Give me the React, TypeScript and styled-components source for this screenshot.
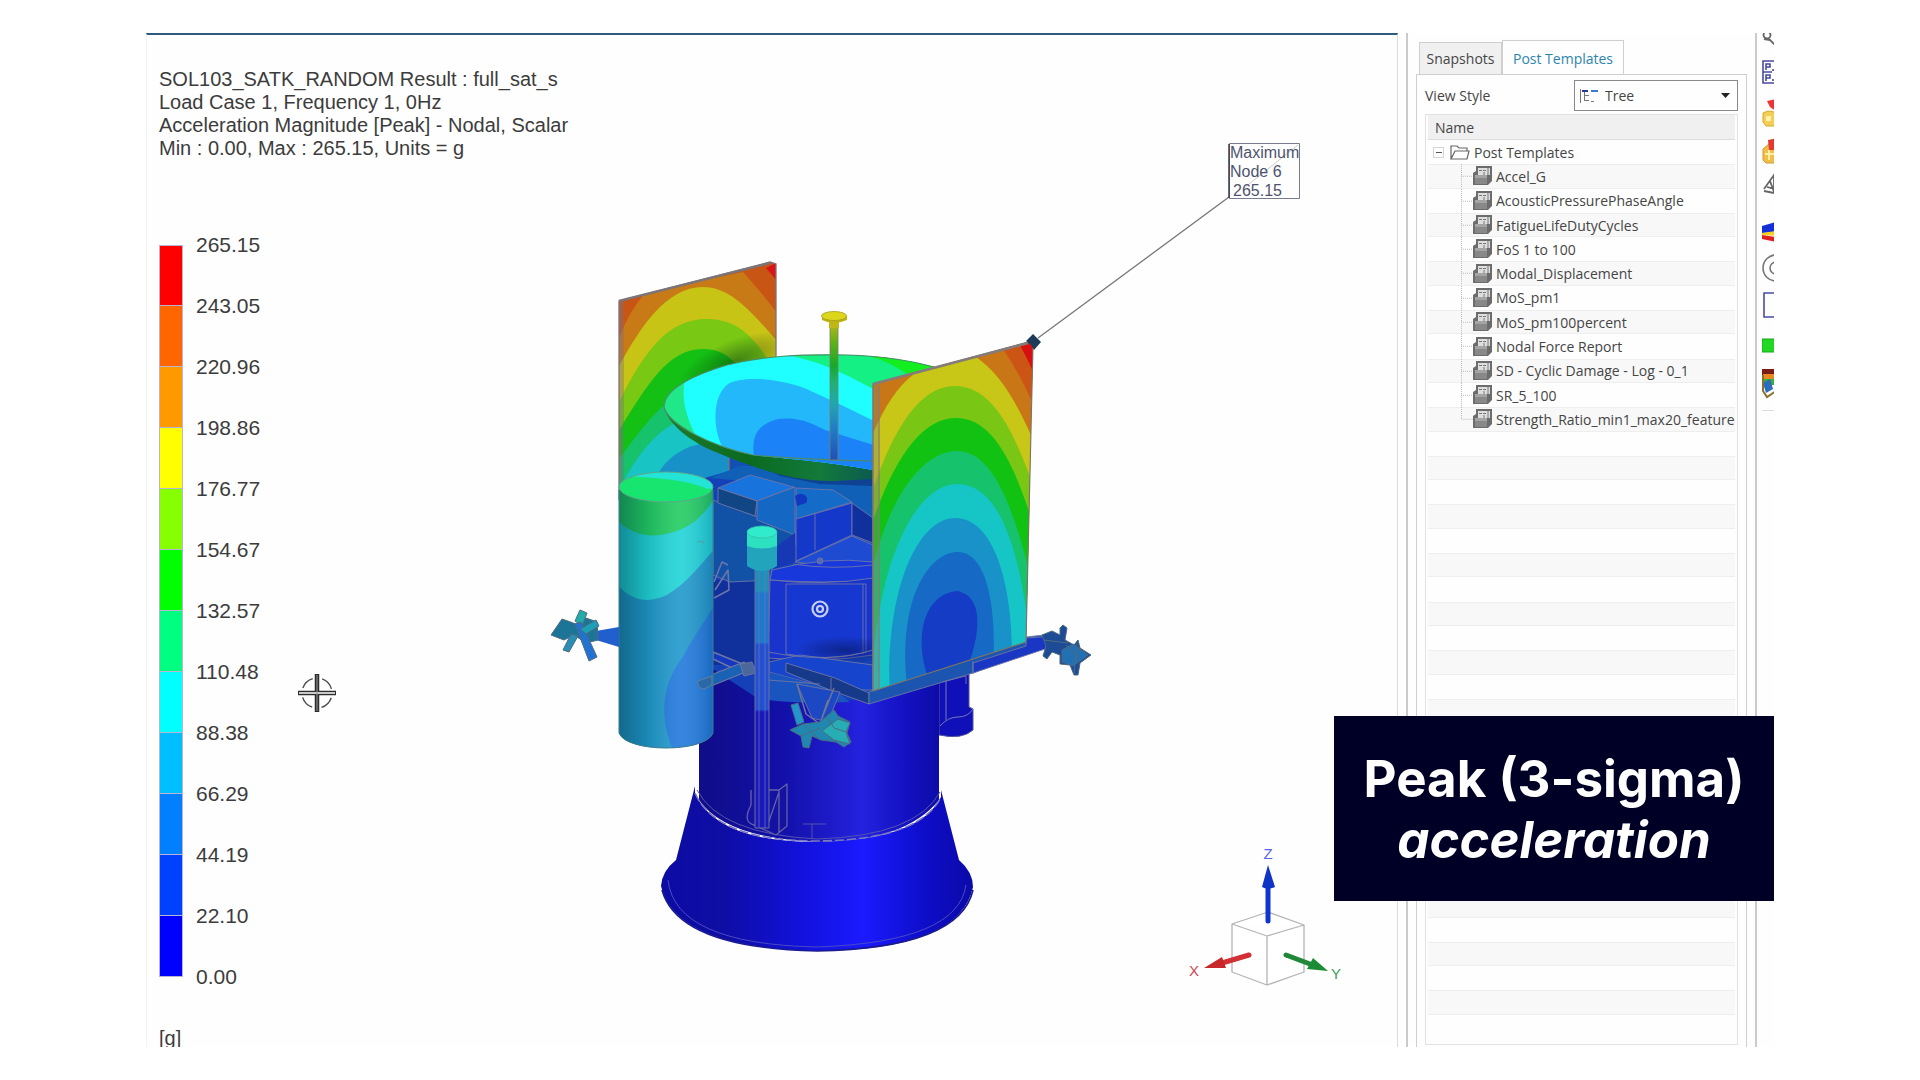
import React from "react";
import styled, { createGlobalStyle } from "styled-components";

const GlobalStyle = createGlobalStyle`
  *, *::before, *::after { box-sizing: border-box; }
  body { margin: 0; background: #fff; }
`;

const ui = `"Open Sans", "Noto Sans", sans-serif`;
const plot = `"Liberation Sans", Arial, sans-serif`;

const Page = styled.div`
  height: 100vh;
  padding: 33px 146px;
  background: #fff;
`;

const Frame = styled.main`
  position: relative;
  display: grid;
  grid-template-columns: minmax(0, 1fr) 8px 351px 17px;
  height: 100%;
  overflow: hidden;
  background: #fefefe;
`;

const Viewport = styled.section`
  display: grid;
  grid-template: minmax(0, 1fr) / minmax(0, 1fr);
  min-height: 0;
  overflow: hidden;
  border-top: 2px solid #2f5b7d;
  border-left: 1px solid #f3f3f3;
  border-right: 1px solid #dcdcdc;
`;

const Canvas = styled.svg`
  grid-area: 1 / 1;
  display: block;
  width: 100%;
  height: 100%;
`;

const Readout = styled.div`
  grid-area: 1 / 1;
  justify-self: start;
  padding: 33px 0 0 12px;
  color: #3c3c3c;
  font-family: ${plot};
  font-size: 20px;
  line-height: 23px;
`;

const ResultTitle = styled.p`
  margin: 0;
  white-space: pre-line;
`;

const Legend = styled.div`
  display: flex;
  gap: 13px;
  margin-top: 54px;
  padding-bottom: 20px;
`;

const Scale = styled.div`
  display: flex;
  flex-direction: column;
  width: 24px;
  margin: 31px 0 30px;
`;

const Band = styled.div<{ $color: string }>`
  height: 61px;
  background: ${(p) => p.$color};
  border: 1px solid #b9b4d6;
  border-top-width: 0;
  &:first-child { border-top-width: 1px; }
`;

const Values = styled.ol`
  margin: 0;
  padding: 0;
  list-style: none;
  font-size: 21px;
`;

const Value = styled.li`
  height: 61px;
  line-height: 61px;
`;

const Unit = styled.p`
  margin: 0;
`;

const Gutter = styled.div`
  background: #fefefe;
`;

const Side = styled.aside`
  display: flex;
  flex-direction: column;
  min-height: 0;
  padding: 7px 8px 0;
  border-left: 2px solid #cbcbcb;
  border-right: 2px solid #cbcbcb;
  color: #454545;
  font-family: ${ui};
  font-size: 14px;
`;

const Tabs = styled.div`
  display: flex;
  align-items: flex-end;
  padding-left: 3px;
`;

const Tab = styled.button<{ $active?: boolean }>`
  height: ${(p) => (p.$active ? 35 : 32)}px;
  width: ${(p) => (p.$active ? 122 : 83)}px;
  margin-bottom: ${(p) => (p.$active ? -1 : 0)}px;
  padding: 0;
  background: ${(p) => (p.$active ? "#fefefe" : "#f0f0f0")};
  border: 1px solid #cfcfcf;
  border-bottom-width: 0;
  color: ${(p) => (p.$active ? "#2d85ad" : "#454545")};
  font: inherit;
`;

const TabBody = styled.div`
  flex: 1;
  display: flex;
  flex-direction: column;
  min-height: 0;
  padding: 5px 8px 2px;
  border: 1px solid #cfcfcf;
  border-bottom: 0;
`;

const Field = styled.div`
  display: flex;
  align-items: center;
  justify-content: space-between;
  margin-bottom: 3px;
`;

const Combo = styled.div`
  display: flex;
  align-items: center;
  gap: 6px;
  width: 164px;
  height: 31px;
  padding: 0 7px 0 4px;
  border: 1px solid #8a8a8a;
`;

const Select = styled.select`
  flex: 1;
  appearance: none;
  padding: 0;
  border: 0;
  background: transparent;
  color: inherit;
  font: inherit;
`;

const TreeBox = styled.div`
  flex: 1;
  display: flex;
  flex-direction: column;
  min-height: 0;
  padding: 0 2px 5px;
  border: 1px solid #e2e2e2;
`;

const TreeHeader = styled.div`
  height: 25px;
  padding-left: 7px;
  background: #f0f0f0;
  border-bottom: 1px solid #dcdcdc;
  line-height: 26px;
`;

const Rows = styled.ul`
  flex: 1;
  display: grid;
  grid-template-rows: repeat(37, minmax(0, 1fr));
  min-height: 0;
  margin: 0;
  padding: 0;
  list-style: none;
`;

const Row = styled.li<{ $leaf?: boolean }>`
  display: flex;
  align-items: center;
  gap: 4px;
  padding-left: ${(p) => (p.$leaf ? 33 : 5)}px;
  white-space: nowrap;
  &:nth-child(even) {
    background: #f8f8f8;
    box-shadow: inset 0 1px #eee, inset 0 -1px #eee;
  }
`;

const Toggle = styled.button`
  display: grid;
  place-items: center;
  width: 11px;
  height: 11px;
  margin-right: 2px;
  padding: 0;
  background: #fff;
  border: 1px solid #d5d5d5;
  &::before { content: ""; width: 6px; height: 1px; background: #555; }
`;

const Branch = styled.svg`
  align-self: stretch;
  width: 12px;
  height: 100%;
  margin-right: -4px;
`;

const Tools = styled.nav`
  display: flex;
  flex-direction: column;
  align-items: flex-start;
  gap: 8px;
  margin-top: -18px;
  padding-left: 5px;
  overflow: hidden;
`;

const ToolGroup = styled.div`
  display: flex;
  flex-direction: column;
  &:last-child { padding-bottom: 7px; border-bottom: 1px solid #ddd; }
`;

const Tool = styled.button`
  width: 28px;
  height: 38px;
  padding: 0;
  border: 0;
  background: transparent;
  svg { display: block; }
`;

const Banner = styled.div`
  position: absolute;
  right: 0;
  bottom: 146px;
  display: flex;
  flex-direction: column;
  justify-content: center;
  width: 440px;
  height: 185px;
  background: #000027;
  color: #fff;
  font: 700 51px/61px Inter, sans-serif;
  text-align: center;
`;

const bands = ["#ff0000", "#ff6600", "#ff9900", "#ffff00", "#86ff00", "#00ff00", "#00ff80", "#00ffff", "#00bfff", "#0080ff", "#0040ff", "#0000ff"];
const values = ["265.15", "243.05", "220.96", "198.86", "176.77", "154.67", "132.57", "110.48", "88.38", "66.29", "44.19", "22.10", "0.00"];
const templates = ["Accel_G", "AcousticPressurePhaseAngle", "FatigueLifeDutyCycles", "FoS 1 to 100", "Modal_Displacement", "MoS_pm1", "MoS_pm100percent", "Nodal Force Report", "SD - Cyclic Damage - Log - 0_1", "SR_5_100", "Strength_Ratio_min1_max20_feature"];
const blanks = Array.from({ length: 25 }, (_, i) => i);

function Gradients() {
  return (
    <defs>
      <linearGradient id="tank" x1="619" x2="713" gradientUnits="userSpaceOnUse">
        <stop offset="0" stopColor="#003040" stopOpacity=".45" />
        <stop offset=".3" stopColor="#003040" stopOpacity=".16" />
        <stop offset=".65" stopColor="#fff" stopOpacity=".1" />
        <stop offset="1" stopColor="#003060" stopOpacity=".22" />
      </linearGradient>
      <linearGradient id="body">
        <stop offset="0" stopColor="#100d88" />
        <stop offset=".35" stopColor="#1210a8" />
        <stop offset=".68" stopColor="#2422de" />
        <stop offset=".85" stopColor="#1412c4" />
        <stop offset="1" stopColor="#0d0ca8" />
      </linearGradient>
      <linearGradient id="cone">
        <stop offset="0" stopColor="#0c0ca4" />
        <stop offset=".2" stopColor="#0e0da4" />
        <stop offset=".45" stopColor="#1211dc" />
        <stop offset=".65" stopColor="#1a1aff" />
        <stop offset=".85" stopColor="#0e0dc8" />
        <stop offset="1" stopColor="#0b0aa8" />
      </linearGradient>
      <linearGradient id="mast" x1="0" x2="0" y1="325" y2="460" gradientUnits="userSpaceOnUse">
        <stop offset="0" stopColor="#b0b818" />
        <stop offset=".14" stopColor="#5cb018" />
        <stop offset=".3" stopColor="#18a828" />
        <stop offset=".42" stopColor="#20b070" />
        <stop offset=".58" stopColor="#20a8b0" />
        <stop offset=".75" stopColor="#2080c8" />
        <stop offset="1" stopColor="#2050b8" />
      </linearGradient>
      <linearGradient id="under" x1="664" x2="873" gradientUnits="userSpaceOnUse">
        <stop offset="0" stopColor="#1f7a2c" />
        <stop offset=".4" stopColor="#0b6a1e" />
        <stop offset=".75" stopColor="#127a3c" />
        <stop offset="1" stopColor="#0c5a50" />
      </linearGradient>
      <linearGradient id="pole" x1="0" x2="0" y1="570" y2="828" gradientUnits="userSpaceOnUse">
        <stop offset="0" stopColor="#1e90b8" />
        <stop offset=".08" stopColor="#1e90b8" />
        <stop offset=".09" stopColor="#2078cc" />
        <stop offset=".28" stopColor="#2078cc" />
        <stop offset=".29" stopColor="#2450d0" />
        <stop offset=".54" stopColor="#2450d0" />
        <stop offset=".55" stopColor="#1a18b8" />
        <stop offset="1" stopColor="#1a18b8" />
      </linearGradient>
      <radialGradient id="shade">
        <stop offset="0" stopColor="#0a3a10" stopOpacity=".5" />
        <stop offset="1" stopColor="#0a3a10" stopOpacity="0" />
      </radialGradient>
      <radialGradient id="dusk">
        <stop offset="0" stopColor="#04104a" stopOpacity=".5" />
        <stop offset="1" stopColor="#04104a" stopOpacity="0" />
      </radialGradient>
      <clipPath id="rearPanel"><path d="M619 301L770 262L776 264V480L729 490V520H619Z" /></clipPath>
      <clipPath id="dishFace"><path d="M664 407C664 392 684 378 727 365C764 356 800 354 847 355C885 356 915 361 950 371V470H873C830 462 790 459 753 455C710 446 668 424 664 407Z" /></clipPath>
      <clipPath id="frontPanel"><path d="M873 384L1028 342L1033 346L1026 642L873 691Z" /></clipPath>
      <clipPath id="tankBody"><path d="M619 487H713V733C706 753 626 753 619 733Z" /></clipPath>
      <clipPath id="tankTop"><ellipse cx="666" cy="487" rx="47" ry="15" /></clipPath>
    </defs>
  );
}

function RearPanel() {
  return (
    <g>
      <g clipPath="url(#rearPanel)">
        <path fill="#c85514" d="M610 255H785V530H610Z" />
        <path fill="#c87a16" d="M619 338C628 315 636 304 646 292L743 272C755 285 766 299 778 314V530H619Z" />
        <path fill="#d81414" d="M766 268L778 262V282Z" />
        <path fill="#c8c416" d="M619 366C640 328 666 287 703 287C732 287 754 315 778 342V530H619Z" />
        <path fill="#78c814" d="M619 402C645 350 668 319 707 319C736 319 752 335 768 360L778 372V530H619Z" />
        <path fill="#14c014" d="M619 430C648 384 668 349 703 349C722 349 732 358 740 370V530H619Z" />
        <path fill="#16c26c" d="M619 459C640 430 655 412 670 400L740 450V530H619Z" />
        <path fill="#18c4c4" d="M624 480C642 448 662 424 690 418L740 450V530H619Z" />
        <path fill="#1890c8" d="M658 474C668 455 690 443 711 443L740 452V530H655Z" />
        <path fill="#1450b4" d="M729 440H785V530H729Z" />
        <path fill="#7a7080" opacity=".4" d="M619 300H624V500H619Z" />
        <ellipse cx="735" cy="362" rx="60" ry="22" transform="rotate(-22 735 362)" fill="url(#shade)" />
      </g>
      <path d="M619 500V301L770 262L776 264V360M729 458V482" fill="none" stroke="#80707a" strokeWidth="1.3" />
      <path d="M619 301L770 263" stroke="#7c7476" strokeWidth="2.4" />
    </g>
  );
}

function Bus() {
  return (
    <g stroke="#6f75a8" strokeWidth=".9" strokeLinejoin="round">
      <path fill="#1440b8" stroke="none" d="M705 478L760 462H875V700L760 700L699 660Z" />
      <path fill="#1060b8" stroke="none" d="M710 478L740 466H873V520L830 500L790 485Z" />
      <path fill="#0f4292" stroke="none" d="M760 466L873 474V486L820 484L780 476Z" />
      <path fill="#10309c" stroke="none" d="M713 580H780V665H713Z" />
      <path fill="#1252a6" d="M713 500L755 516L795 527V545L772 560V580L730 582L713 575Z" />
      <path fill="#1874dc" d="M718 488L750 475L794 487L757 501Z" />
      <path fill="#104684" d="M718 488L757 501L755 516L718 503Z" />
      <path fill="#1468c4" d="M757 501L795 487V535L757 520Z" />
      <path fill="#1638b4" stroke="none" d="M795 533V562L775 568L778 545Z" />
      <path fill="#146cc8" d="M796 488L833 490L852 502L796 519Z" />
      <path fill="#1038c0" stroke="none" d="M795 496C802 491 810 496 806 503L797 506Z" />
      <path fill="#1438ca" d="M796 519L852 503V535L796 561Z" />
      <path fill="#10309e" d="M852 503L873 518V543L852 535Z" />
      <path fill="#1d4cd2" d="M795 562L852 536L873 545V562Q835 569 795 562Z" />
      <path d="M815 514V550" />
      <path fill="#1838dc" d="M772 570Q825 556 873 562V580Q825 584 770 580Z" />
      <path fill="#1834cc" d="M770 580Q825 586 873 578V655Q825 663 768 658Z" />
      <path fill="#1638d0" d="M786 584H866V652Q828 662 786 654Z" />
      <path fill="none" d="M863 584V654M793 564Q830 570 873 565" />
      <ellipse cx="845" cy="650" rx="50" ry="14" fill="url(#dusk)" stroke="none" />
      <circle cx="820" cy="561" r="3" fill="#5868b0" />
      <path fill="none" strokeWidth="1.5" d="M715 590L728 570L729 590L714 598M714 582L722 562L728 565" />
      <g fill="none" stroke="#c9d0f4" strokeWidth="2.2">
        <circle cx="820" cy="609" r="7.5" />
        <circle cx="820" cy="609" r="3" />
      </g>
    </g>
  );
}

function Base() {
  return (
    <g strokeLinejoin="round">
      <path fill="#1010b8" stroke="#55579a" d="M939 668H969V707L973 709V730Q962 740 939 735Z" />
      <path fill="none" stroke="#7478b8" d="M946 680V720M940 726Q948 717 958 717T973 709" />
      <path fill="url(#body)" d="M699 655L800 680H939V800Q905 842 817 842Q725 838 699 800Z" />
      <path fill="url(#cone)" d="M695 786L695 793Q716 842 817 842Q920 840 941 797V790L959 860Q973 872 973 887Q960 950 817 951Q675 948 661 886Q662 871 676 860Z" />
      <path fill="none" stroke="#1a1a90" strokeWidth="1.6" d="M662 890Q678 948 817 951Q960 948 973 890" />
      <path fill="none" stroke="#4a4ac0" d="M668 880Q675 944 817 947Q958 942 966 885" />
      <path fill="none" stroke="#7a78c0" strokeWidth="1.6" strokeDasharray="9 3" d="M695 793Q716 841 817 841Q920 840 941 797" />
      <path fill="none" stroke="#5553b0" d="M697 790Q720 834 817 839Q916 836 940 792M803 824H826M812 824V838" />
      <path fill="#1412a0" stroke="#6462a8" strokeWidth="1.3" d="M768 790H779L787 784V826L776 835L754 825Q742 822 751 805V790M779 790V832M779 792L768 824" />
    </g>
  );
}

function Deck() {
  return (
    <g stroke="#6e76a4" strokeWidth=".9" strokeLinejoin="round">
      <path fill="#1644cc" d="M769 662L800 655L873 665V690L835 690L769 672Z" />
      <path fill="#1a54be" stroke="none" d="M768 672L835 690L850 702Q800 704 768 700Z" />
      <path fill="#16398a" d="M786 663L835 678L869 693V704L830 690L786 672Z" />
      <path fill="#1b55b0" d="M869 692L1026 637L1053 634L1058 644L1027 652L973 673L869 704Z" />
      <path fill="#1a36c4" d="M973 663L1026 646V638L1054 636L1060 644L1027 655L973 673Z" />
      <path fill="none" d="M768 652Q830 664 873 650M768 680L820 684M973 661V674M831 678V690M942 682L966 676V684" />
      <path fill="#1c48c4" d="M797 684L840 692L828 722L812 718Z" />
      <path fill="#1538c0" strokeWidth="1.5" d="M713 652L745 665L743 673L713 659Z" />
      <path fill="#1a62b4" strokeWidth="1.3" d="M698 680L744 662L748 671L704 689Q697 688 698 680Z" />
      <path fill="#4a689c" d="M740 664L752 662L756 673L744 676Z" />
    </g>
  );
}

function Tank() {
  return (
    <g>
      <g clipPath="url(#tankBody)">
        <path fill="#2098cc" d="M615 480H718V755H615Z" />
        <path fill="#20d4d8" d="M615 480H718V545C700 565 690 580 667 595C650 603 632 603 615 582Z" />
        <path fill="#22cc60" d="M615 480H718V492C705 516 690 528 670 533C650 539 630 534 615 518Z" />
        <path fill="#2078dc" d="M718 600C700 628 692 640 683 657C665 680 656 712 674 752H718Z" />
        <path fill="url(#tank)" d="M615 480H718V755H615Z" />
      </g>
      <g clipPath="url(#tankTop)">
        <path fill="#18e470" d="M615 470H718V505H615Z" />
        <path fill="#24e4d8" d="M624 470H718V488L708 489C685 479 655 478 624 476Z" />
      </g>
      <ellipse cx="666" cy="487" rx="47" ry="15" fill="none" stroke="#5aa88c" />
      <path d="M619 490V733C626 753 706 753 713 733V490" fill="none" stroke="#3a7c90" />
      <path d="M697 542L703 541V545" fill="none" stroke="#50a0a8" />
    </g>
  );
}

function Pole() {
  return (
    <g>
      <path fill="url(#pole)" stroke="#6a70a0" d="M755 568H769V828H755Z" />
      <path stroke="#6878c0" opacity=".7" d="M759 572V828M765 572V828" />
      <path fill="#22a4bc" d="M747 532H777V566Q762 576 747 566Z" />
      <path fill="#2ce0c0" d="M747 532H777V546Q762 551 747 546Z" />
      <ellipse cx="762" cy="532" rx="15" ry="6" fill="#30eccc" stroke="#3cb8a8" strokeWidth=".7" />
    </g>
  );
}

function Dish() {
  return (
    <g>
      <path fill="url(#under)" d="M664 407C668 424 690 441 713 451C750 466 790 482 835 481L873 479V458L753 450Z" />
      <g clipPath="url(#dishFace)">
        <path fill="#20ffff" d="M655 345H960V475H655Z" />
        <path fill="#20e888" d="M655 345H700L684 384C682 405 688 420 696 436H655Z" />
        <path fill="#22b8fa" d="M724 450C712 430 712 396 728 384C745 374 790 380 813 392C840 404 860 414 880 424V475H724Z" />
        <path fill="#1c82f8" d="M754 456C751 436 758 424 778 419C800 416 815 425 825 430L880 447V475H754Z" />
        <path fill="#14f084" d="M795 357C830 364 850 378 880 392L950 420V340H795Z" />
        <path fill="#12ee20" d="M868 356C885 360 900 368 915 380H960V350H868Z" />
      </g>
      <path d="M664 407C664 392 684 378 727 365C764 356 800 354 847 355C885 356 915 361 940 369M664 407C668 424 710 446 753 455C790 459 830 460 873 461" fill="none" stroke="#4b8c64" strokeWidth="1.2" />
      <path fill="url(#mast)" stroke="#77806c" strokeWidth=".8" d="M830 322H838V460H830Z" />
      <path fill="#c0b818" d="M829 321H839V328H829Z" />
      <path fill="#bcb414" d="M822 316V320Q834 326 847 320V316Z" />
      <ellipse cx="834" cy="316" rx="12.5" ry="4.5" fill="#dcd61c" stroke="#a49e20" strokeWidth=".8" />
    </g>
  );
}

function FrontPanel() {
  return (
    <g>
      <g clipPath="url(#frontPanel)">
        <path fill="#c87616" d="M865 335H1040V700H865Z" />
        <path fill="#cc5414" d="M1000 345C1014 364 1024 384 1034 406V335H1000Z" />
        <path fill="#d80e10" d="M1018 342C1024 352 1029 362 1035 376V335H1018Z" />
        <path fill="#c8c616" d="M865 452C880 415 893 390 914 374L973 355C1002 374 1017 404 1035 444V700H865Z" />
        <path fill="#7ac614" d="M865 512C888 440 915 386 955 386C995 386 1016 438 1035 490V700H865Z" />
        <path fill="#12c212" d="M865 545C890 462 920 418 956 418C994 418 1015 466 1035 530V700H865Z" />
        <path fill="#16c26c" d="M865 605C882 500 922 451 957 451C994 451 1016 512 1035 596V700H865Z" />
        <path fill="#16c6c6" d="M872 700C872 570 914 484 957 484C1000 484 1020 550 1030 640V700Z" />
        <path fill="#1892c8" d="M890 700C884 590 918 518 955 518C996 518 1013 590 1012 660V700Z" />
        <path fill="#166ac6" d="M909 700C894 610 925 552 958 552C986 552 997 604 993 670Z" />
        <path fill="#153cc4" d="M933 690C912 646 920 595 957 591C986 596 980 640 964 675Z" />
        <path fill="#84806e" opacity=".35" d="M873 380H880V691H873Z" />
      </g>
      <path d="M873 384L1028 342L1033 346L1026 642L873 691Z" fill="none" stroke="#7d7068" strokeWidth="1.1" />
      <path d="M873 384L1028 343" stroke="#857c7a" strokeWidth="2.6" />
      <path d="M873 384V691M879 386V690" stroke="#857c74" strokeWidth="1" />
    </g>
  );
}

function Thrusters() {
  return (
    <g stroke="#4d6b80" strokeLinejoin="round">
      <path fill="#2160cc" stroke="none" d="M596 631L619 627V647L596 640Z" />
      <path fill="#1c7496" d="M551 635L562 619L576 624L586 618L597 622L598 640L586 643L574 635L564 640Z" />
      <path fill="#2a8eb4" d="M571 634L563 650L569 652L578 636Z" />
      <path fill="#20aca8" d="M575 621L580 610L587 613L582 626Z" />
      <path fill="#2272d2" d="M575 624L581 622L597 657L589 661Z" />
      <path fill="#1ca0b8" d="M580 629L596 620L599 626L586 634Z" />
      <path fill="#1d4b96" d="M1042 635L1052 631L1060 635V628L1063 625L1067 628L1065 640L1074 645L1078 640L1080 648L1091 655L1080 663L1078 675L1074 675L1070 665L1060 664V655L1052 652L1047 659L1043 656L1046 646Z" />
      <path fill="#2170b4" d="M1062 650L1073 644L1088 655L1073 666L1062 662Z" />
      <path fill="none" d="M1044 640L1068 643M1066 645L1078 658M1074 674L1077 644" />
      <path fill="none" stroke="#6f7890" strokeWidth="1.5" d="M797 684L806 714L820 724L828 700M834 688L822 718" />
      <path fill="#2296cc" d="M791 705L798 703L804 722L797 725Z" />
      <path fill="#2088b0" d="M790 730L803 724L820 722L834 710L838 716L850 722L847 733L851 742L844 747L836 742L821 740L812 736L809 748L803 747L801 736Z" />
      <path fill="#27aeb4" d="M822 731L838 719L850 723L846 732L850 744L834 740Z" />
      <path fill="none" d="M804 725L818 738M828 718L834 728L846 732M801 736L820 728" />
    </g>
  );
}

function Triad() {
  return (
    <g fontFamily='"Liberation Sans", Arial, sans-serif' fontSize="15" textAnchor="middle">
      <path fill="#fff" stroke="#b4b4b4" strokeWidth="1.3" strokeLinejoin="round" d="M1232 924L1268 912L1304 925V972L1267 985L1232 972ZM1232 924L1267 936L1304 925M1267 936V985" />
      <path stroke="#1034d0" strokeWidth="5" strokeLinecap="round" d="M1268 921V885" />
      <path fill="#1034c4" d="M1262 887L1268 865L1275 887Q1268 890 1262 887Z" />
      <path stroke="#d23034" strokeWidth="5" strokeLinecap="round" d="M1249 955L1222 963" />
      <path fill="#c8282c" d="M1204 968L1222 957L1226 968Z" />
      <path stroke="#208838" strokeWidth="5" strokeLinecap="round" d="M1286 955L1310 964" />
      <path fill="#1c8c34" d="M1328 971L1313 958L1307 969Z" />
      <text x="1268" y="859" fill="#5a62f0">Z</text>
      <text x="1194" y="976" fill="#d04858">X</text>
      <text x="1336" y="979" fill="#3c9c58">Y</text>
    </g>
  );
}

function ModelView() {
  return (
    <Canvas viewBox="147 35 1250 1012" preserveAspectRatio="xMidYMid meet" role="img" aria-label="Satellite acceleration contour plot">
      <Gradients />
      <RearPanel />
      <Base />
      <Bus />
      <Deck />
      <Dish />
      <Pole />
      <Tank />
      <path fill="#2a68a8" stroke="#60809c" d="M698 681L712 676V685L704 689Q697 688 698 681Z" />
      <FrontPanel />
      <Thrusters />
      <Triad />
      <g fill="none" stroke="#4a4a4a" strokeWidth="1.4">
        <circle cx="317" cy="693" r="15" strokeDasharray="14 9.560" strokeDashoffset="-4.800" />
        <path stroke="#2c2c2c" strokeWidth="4.500" d="M317 674V712M298 693H336" />
        <path stroke="#fff" strokeWidth="1.500" d="M299 693H335" />
        <path stroke="#999" strokeWidth="1" d="M317 675V711" />
      </g>
      <path d="M1229 197L1038 338" stroke="#777" strokeWidth="1.300" />
      <path fill="#1d3a58" d="M1026 341L1033 334L1041 342L1034 350L1031 345Z" />
      <path fill="#fefeff" stroke="#777b8c" d="M1229.500 143.500H1299.500V198.500H1229.500Z" />
      <path stroke="#34384c" strokeWidth="1.500" d="M1229 144V198" />
      <path stroke="#ccc" d="M1244 188L1298 145" />
      <g fontFamily='"Liberation Sans", Arial, sans-serif' fontSize="16" fill="#4f546e">
        <text x="1230" y="158">Maximum</text>
        <text x="1230" y="177">Node 6</text>
        <text x="1233" y="196">265.15</text>
      </g>
    </Canvas>
  );
}

function TemplateIcon() {
  return (
    <svg width="19" height="20" viewBox="0 0 19 20" aria-hidden="true">
      <path fill="#6c6c6c" d="M3 0H19V15L15 19H0V7L3 5Z" />
      <path fill="#dedede" d="M5 2H17V9H5Z" />
      <path stroke="#777" d="M6 4.500H9M10 4.500H13M15 2V9M11 6V9" />
      <path fill="#a4a4a4" d="M2 9H14V12H2Z" />
      <path fill="#888" d="M2 12H14V18H2Z" />
    </svg>
  );
}

function FolderIcon() {
  return (
    <svg width="20" height="17" viewBox="0 0 20 17" fill="none" stroke="#666" strokeWidth="1.200" aria-hidden="true">
      <path d="M1 15V2H7L9 4H17V7M1 15L5 7H19L17 15Z" />
    </svg>
  );
}

const tools = [
  { name: "Inspect", art: <g fill="none" stroke="#666" strokeWidth="1.800"><circle cx="5" cy="20" r="3.500" /><path d="M7 24L14 31M2 24L8 25" /></g> },
  { name: "Parameters", art: <g fill="none" stroke="#4a4aa0" strokeWidth="1.600"><path d="M1 8H22V30H1ZM1 19H10M4 17V11H8V14H4M4 28V22H8V25H4M11 16V18M11 26V28" /></g> },
  { name: "New template", art: <g><path fill="#e33" d="M5 10L14 8V20L8 16Z" /><path fill="#f5cf55" stroke="#d8a82c" d="M1 22L6 20L18 22V35H4L1 31Z" /><path fill="#fff2b0" d="M4 25H9V30H4Z" /></g> },
  { name: "Edit template", art: <g><path fill="#f2bd48" stroke="#d09a2c" d="M1 20L8 14H20V34H4L1 31Z" /><path fill="#e23a30" d="M6 11L16 9V21H7Z" /><path stroke="#fff0a8" strokeWidth="2" d="M3 25H12M7 21V31" /></g> },
  { name: "Measure", art: <g fill="none" stroke="#666" strokeWidth="1.800"><path d="M2 22L12 8V26L2 24M5 20L13 22M8 14L14 30" /></g> },
];

const plotTools = [
  { name: "Contour", art: <g><path fill="#1530d8" d="M0 13L14 9V19L0 20Z" /><path fill="#f4d020" d="M0 20L14 18V23L0 22Z" /><path fill="#e02020" d="M0 22L14 24V29L0 26Z" /></g> },
  { name: "Rings", art: <g fill="none" stroke="#777" strokeWidth="1.600"><circle cx="14" cy="17" r="13" /><circle cx="14" cy="17" r="6" /></g> },
  { name: "Frame", art: <path fill="none" stroke="#4a4aa8" strokeWidth="1.600" d="M2 4H26V28H2Z" /> },
  { name: "Solid", art: <path fill="#22d822" stroke="#18a818" d="M0 12H20V25H0Z" /> },
  { name: "Result", art: <g><path fill="#7a1c18" d="M0 4H14V10H0Z" /><path fill="#e88a20" d="M1 9H14V14H1Z" /><path fill="#3cae3c" d="M1 14H14V20H1Z" /><path fill="#2a6cc0" d="M1 18L8 14L11 24L4 28Z" /><path fill="none" stroke="#8a7030" strokeWidth="2" d="M1 10V26L5 32L14 26" /></g> },
];

function ToolButton({ name, art }: { name: string; art: React.ReactNode }) {
  return (
    <Tool aria-label={name}>
      <svg width="28" height="38" viewBox="0 0 28 38">{art}</svg>
    </Tool>
  );
}

export default function App() {
  return (
    <Page>
      <GlobalStyle />
      <Frame>
        <Viewport>
          <ModelView />
          <Readout>
            <ResultTitle>
              {"SOL103_SATK_RANDOM Result : full_sat_s\nLoad Case 1, Frequency 1, 0Hz\nAcceleration Magnitude [Peak] - Nodal, Scalar\nMin : 0.00, Max : 265.15, Units = g"}
            </ResultTitle>
            <Legend>
              <Scale>{bands.map((c) => <Band key={c} $color={c} />)}</Scale>
              <Values>{values.map((v) => <Value key={v}>{v}</Value>)}</Values>
            </Legend>
            <Unit>[g]</Unit>
          </Readout>
        </Viewport>
        <Gutter />
        <Side>
          <Tabs role="tablist">
            <Tab role="tab" aria-selected={false}>Snapshots</Tab>
            <Tab role="tab" aria-selected $active>Post Templates</Tab>
          </Tabs>
          <TabBody>
            <Field>
              <label htmlFor="view-style">View Style</label>
              <Combo>
                <svg width="20" height="16" viewBox="0 0 20 16" fill="none" aria-hidden="true">
                  <path stroke="#777" d="M1.500 1V15M5.500 2V12M5 7.500H10M5 12.500H10M12 13.500H15" />
                  <path stroke="#2a3c8c" strokeWidth="2" d="M3 3H9" />
                  <path stroke="#3a7cc8" strokeWidth="2" d="M12 3H19" />
                </svg>
                <Select id="view-style" defaultValue="Tree">
                  <option>Tree</option>
                </Select>
                <svg width="9" height="5" viewBox="0 0 9 5" aria-hidden="true"><path d="M0 0H9L4.500 5Z" fill="#222" /></svg>
              </Combo>
            </Field>
            <TreeBox>
              <TreeHeader>Name</TreeHeader>
              <Rows>
                <Row>
                  <Toggle aria-label="Collapse Post Templates" />
                  <FolderIcon />
                  Post Templates
                </Row>
                {templates.map((t, i) => (
                  <Row key={t} $leaf>
                    <Branch viewBox="0 0 12 24" preserveAspectRatio="none" aria-hidden="true">
                      <path d={i === templates.length - 1 ? "M.5 0V12H12" : "M.5 0V24M0 12H12"} fill="none" stroke="#bbb" strokeDasharray="1 1" />
                    </Branch>
                    <TemplateIcon />
                    {t}
                  </Row>
                ))}
                {blanks.map((b) => <Row key={b} aria-hidden="true" />)}
              </Rows>
            </TreeBox>
          </TabBody>
        </Side>
        <Tools aria-label="Post processing">
          <ToolGroup>{tools.map((t) => <ToolButton key={t.name} {...t} />)}</ToolGroup>
          <ToolGroup>{plotTools.map((t) => <ToolButton key={t.name} {...t} />)}</ToolGroup>
        </Tools>
        <Banner>
          <span>Peak (3-sigma)</span>
          <em>acceleration</em>
        </Banner>
      </Frame>
    </Page>
  );
}
